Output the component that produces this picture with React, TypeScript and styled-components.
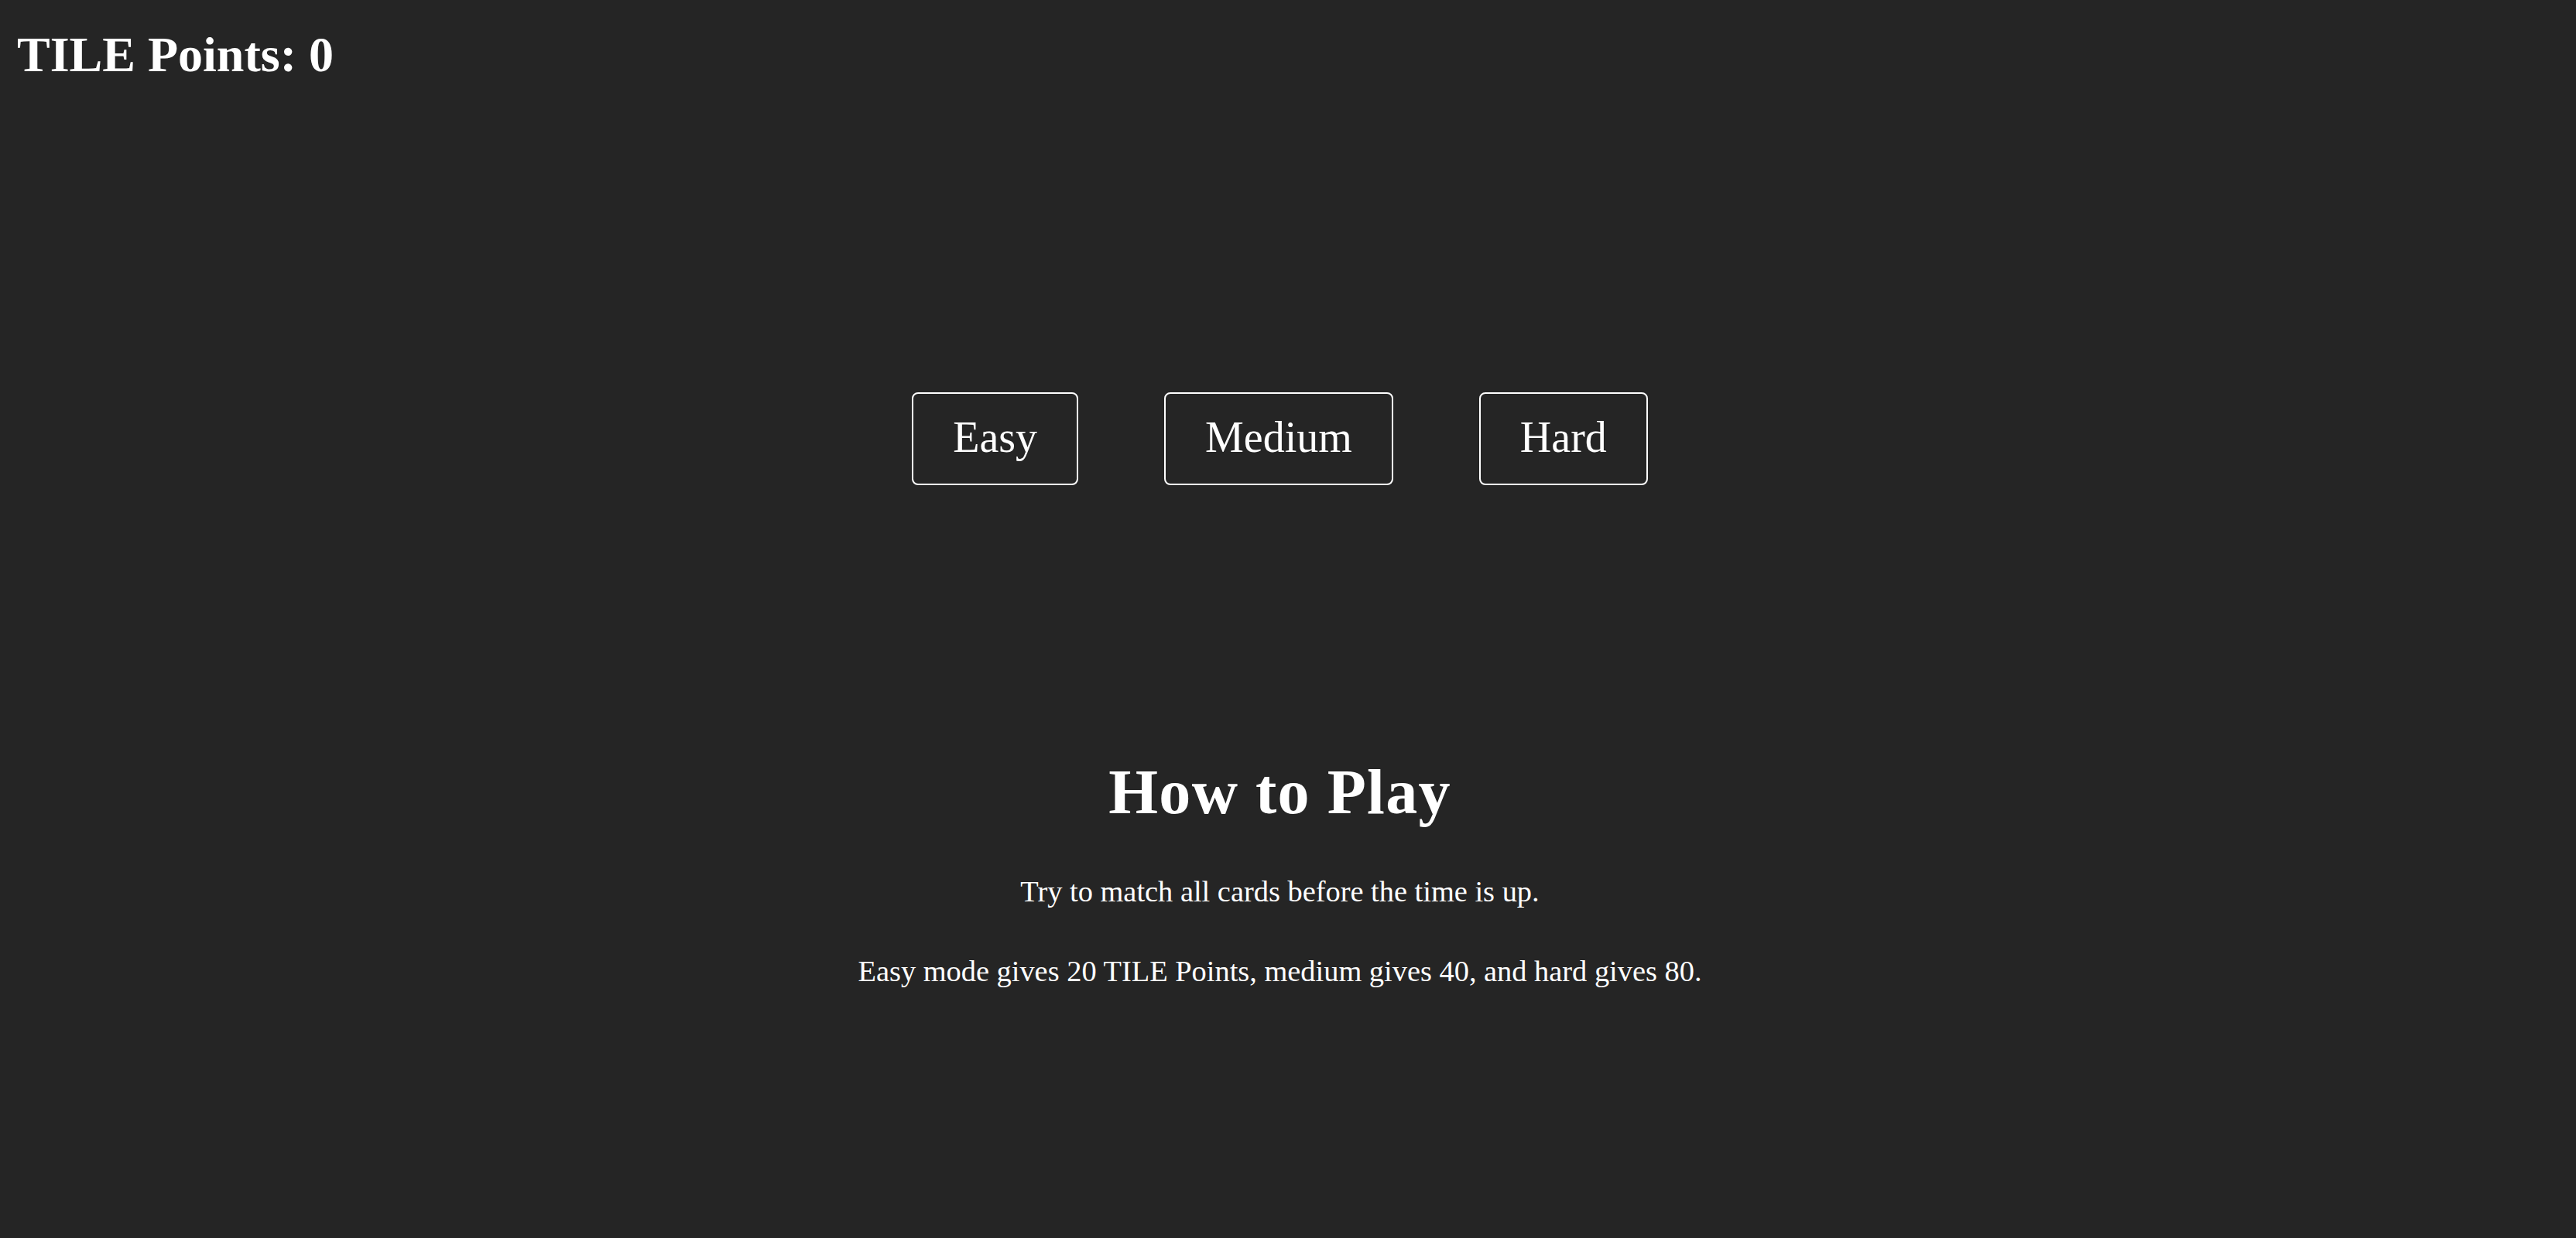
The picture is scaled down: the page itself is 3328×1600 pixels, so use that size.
import React from "react";
import styled, { createGlobalStyle } from "styled-components";

const GlobalStyle = createGlobalStyle`
  html, body {
    margin: 0;
    padding: 0;
    background: #252525;
  }

  body {
    color: #fff;
    font-family: "Liberation Serif", "Times New Roman", serif;
  }
`;

const Page = styled.div`
  min-height: 100vh;
  padding: 34px 21px 0 0;
  box-sizing: border-box;
  background: #252525;
`;

const Score = styled.h1`
  margin: 0 0 0 22px;
  font-size: 64px;
  line-height: 1.15;
  font-weight: 700;
`;

const Levels = styled.div`
  display: flex;
  justify-content: center;
  gap: 111px;
  margin-top: 399px;
`;

const LevelButton = styled.button`
  padding: 24px 51px 28px;
  border: 2px solid #fff;
  border-radius: 8px;
  background: transparent;
  color: #fff;
  font-family: inherit;
  font-size: 56px;
  line-height: 1.15;
  cursor: pointer;

  &:hover {
    background: rgba(255, 255, 255, 0.06);
  }
`;

const Rules = styled.section`
  margin-top: 350px;
  text-align: center;

  h2 {
    margin: 0;
    font-size: 82px;
    line-height: 1.15;
    font-weight: 700;
    letter-spacing: 1.3px;
  }

  p {
    margin: 59px 0 0;
    font-size: 38.4px;
    line-height: 1.15;

    & + p {
      margin-top: 59px;
    }
  }
`;

const levels = ["Easy", "Medium", "Hard"];

const App = () => {
  return (
    <Page>
      <GlobalStyle />
      <Score>TILE Points: 0</Score>
      <Levels>
        {levels.map((level) => (
          <LevelButton key={level}>{level}</LevelButton>
        ))}
      </Levels>
      <Rules>
        <h2>How to Play</h2>
        <p>Try to match all cards before the time is up.</p>
        <p>Easy mode gives 20 TILE Points, medium gives 40, and hard gives 80.</p>
      </Rules>
    </Page>
  );
};

export default App;
